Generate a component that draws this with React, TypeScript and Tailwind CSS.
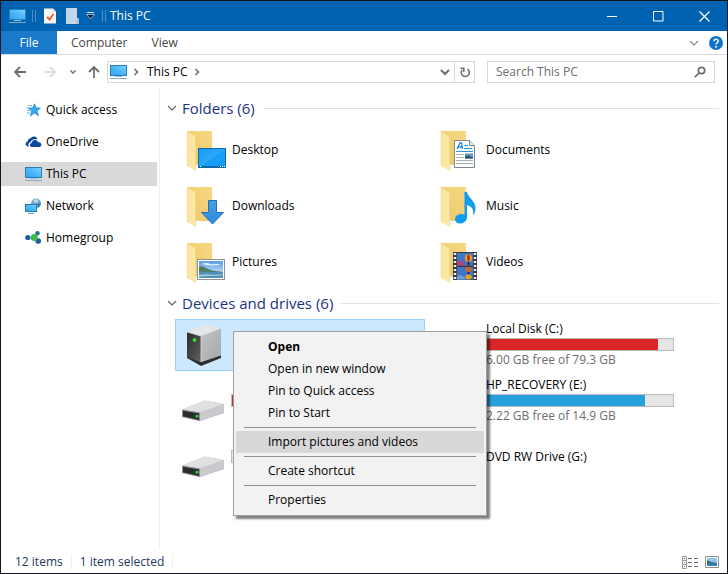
import type { ReactNode } from "react";

/* Gradients shared by all the drawn icons. */
function Gradients() {
  return (
    <svg width="0" height="0" className="absolute" aria-hidden="true">
      <defs>
        <linearGradient id="screen" x1="0" y1="1" x2="1" y2="0">
          <stop offset="0" stopColor="#2ea4ee" />
          <stop offset="0.5" stopColor="#4cb8f8" />
          <stop offset="1" stopColor="#7fd3ff" />
        </linearGradient>
        <linearGradient id="folderBack" x1="1" y1="0" x2="0" y2="1">
          <stop offset="0" stopColor="#f6d783" />
          <stop offset="1" stopColor="#ecc768" />
        </linearGradient>
        <linearGradient id="folderFront" x1="0" y1="0" x2="1" y2="1">
          <stop offset="0" stopColor="#fbe3a0" />
          <stop offset="1" stopColor="#fee9a8" />
        </linearGradient>
        <linearGradient id="desk" x1="0" y1="0" x2="1" y2="1">
          <stop offset="0" stopColor="#0f9bf8" />
          <stop offset="0.5" stopColor="#2fa9fb" />
          <stop offset="0.52" stopColor="#1a9df9" />
          <stop offset="1" stopColor="#149cf8" />
        </linearGradient>
        <linearGradient id="arrowBlue" x1="0" y1="0" x2="0" y2="1">
          <stop offset="0" stopColor="#4a9fe4" />
          <stop offset="1" stopColor="#2c8ce0" />
        </linearGradient>
        <linearGradient id="sky" x1="0" y1="0" x2="0" y2="1">
          <stop offset="0" stopColor="#5b9ce6" />
          <stop offset="1" stopColor="#e6f2fb" />
        </linearGradient>
        <linearGradient id="metal" x1="0" y1="0" x2="1" y2="1">
          <stop offset="0" stopColor="#c4c5c7" />
          <stop offset="1" stopColor="#a4a6a8" />
        </linearGradient>
        <linearGradient id="dark" x1="0" y1="0" x2="1" y2="1">
          <stop offset="0" stopColor="#2a2a2a" />
          <stop offset="1" stopColor="#626262" />
        </linearGradient>
      </defs>
    </svg>
  );
}

function PcIcon() {
  return (
    <svg width="17" height="16" viewBox="0 0 17 16" aria-hidden="true">
      <rect x="0.5" y="1.5" width="16" height="10" fill="url(#screen)" stroke="#2b7db8" />
      <path d="M5 12h7v1H5z" fill="#8fc3e6" />
      <path d="M0 14.5h17" stroke="#8da9c4" />
    </svg>
  );
}

function StarIcon() {
  return (
    <svg width="16" height="16" viewBox="0 0 16 16" aria-hidden="true">
      <path d="M9.6 1.8l1.4 4 4.4.3-3.4 2.8 1.4 4.800-4-2.600-4.200 3 1.500-5L3.400 6.100l4.400-.2z" fill="#33a9ee" stroke="#1d84cf" strokeWidth="0.7" />
      <path d="M3.500 3.500h3.500M1.500 6H4M2.500 8.500H5M2 11h3" stroke="#5fb4ea" />
    </svg>
  );
}

function CloudIcon() {
  return (
    <svg width="17" height="16" viewBox="0 0 17 16" aria-hidden="true">
      <path d="M2.600 12.500A2.600 2.600 0 0 1 2.400 7.500 4 4 0 0 1 5.500 4.200 4.200 4.200 0 0 1 12.400 4.600L11 5.400C8 4.600 5.800 6.500 5.600 8.200 3.500 8.500 2.800 10.500 3.800 12.500z" fill="#0c479d" />
      <path d="M6.400 13A2.100 2.100 0 0 1 6.500 8.900 3.500 3.500 0 0 1 13.200 8.300 2.400 2.400 0 0 1 14.500 13z" fill="#0c479d" />
    </svg>
  );
}

function NetworkIcon() {
  return (
    <svg width="17" height="16" viewBox="0 0 17 16" aria-hidden="true">
      <circle cx="11" cy="5.500" r="5" fill="#6fa7c4" />
      <path d="M8 2.200c2-1.500 4.500-1 5.500.6L11.500 5l-2-.5z" fill="#b9d8e6" />
      <path d="M12 6l3.500-1c.3 2-.8 3.500-2 4.300z" fill="#3c7da3" />
      <rect x="0.500" y="6.500" width="11" height="7" fill="url(#screen)" stroke="#2779b5" />
      <path d="M3 15.500h6" stroke="#6c9fc6" />
    </svg>
  );
}

function HomegroupIcon() {
  return (
    <svg width="17" height="16" viewBox="0 0 17 16" aria-hidden="true">
      <path d="M3 8h6l3-4M9 8l4 4" stroke="#9cc4dd" strokeWidth="1.200" fill="none" />
      <circle cx="2.800" cy="7.500" r="2.600" fill="#1b5fa6" />
      <circle cx="12.500" cy="3.200" r="2.200" fill="#1c6fa8" />
      <circle cx="13.200" cy="11" r="2.800" fill="#185a9c" />
      <circle cx="9.200" cy="7.500" r="3.500" fill="#3cbb4a" />
    </svg>
  );
}

function Folder({ children }: { children: ReactNode }) {
  return (
    <svg width="41" height="42" viewBox="0 0 41 42" aria-hidden="true">
      <path d="M1 1H26V35H8z" fill="url(#folderBack)" />
      <path d="M9 34l3 1-3 5z" fill="#f0f0f0" />
      <path d="M1 1L9.500 6.500V40.500L1 35.500z" fill="url(#folderFront)" stroke="#f3d685" strokeWidth="0.500" />
      {children}
    </svg>
  );
}

const folderArt: Record<string, ReactNode> = {
  Desktop: (
    <>
      <rect x="12.500" y="18.500" width="27" height="19" fill="url(#desk)" stroke="#1468a8" />
      <path d="M13 36.500h26" stroke="#0d6db8" />
      <path d="M14 36.500h1M34 36.500h1M36 36.500h1M38 36.500h1" stroke="#fff" />
    </>
  ),
  Downloads: (
    <path d="M22.500 14.500h8v12h7L26.500 38 15.500 26.500h7z" fill="url(#arrowBlue)" stroke="#2470b8" />
  ),
  Pictures: (
    <>
      <rect x="11.500" y="17.500" width="27" height="20" fill="#fff" stroke="#8d9399" />
      <rect x="13" y="19" width="24" height="17" fill="url(#sky)" />
      <path d="M16 22c3-1.500 6-1 8 0s6-1 10 .5c-5 1.500-14 1-18-.5z" fill="#e9f3fb" />
      <path d="M13 25c3-2 5 0 8 1.500s6 2.500 16 3.500v1H13z" fill="#4d7d5a" />
      <path d="M13 30c7-1 15 0 24 0V36H13z" fill="#4f8fb8" />
      <path d="M13 33c7-2 14 1 24-1v1c-8 2-16 0-24 2z" fill="#9cc7de" />
    </>
  ),
  Documents: (
    <>
      <path d="M14.500 10.500h15l5 5v22h-20z" fill="#fdfdfd" stroke="#7d8790" />
      <path d="M29.500 10.500v5h5" fill="#e4e8eb" stroke="#7d8790" />
      <path d="M17 19l3-6h1.500l1 6M18.500 17h3.500" stroke="#1b86d4" strokeWidth="1.300" fill="none" />
      <path d="M24 15.500h4M24 18.500h8M16 21.500h17" stroke="#2b94dc" />
      <path d="M16 24.500h8M16 27.500h8M16 30.500h17M16 33.500h17" stroke="#a8b0b6" />
      <rect x="25" y="23.500" width="8" height="5" fill="#5d94bf" />
      <path d="M25 28.500v-2l3-1 5 2v1z" fill="#2c5670" />
    </>
  ),
  Music: (
    <path d="M24.500 6h2.500c1 6 9 9 8.500 17-.2 3-1.200 5-2.500 6.500 1.200-6-1-9-6-10.500V31c0 4-3.500 6.500-7 6.500-3 0-5-1.800-5-4.500s3-5 6.500-5c1.200 0 2.200.2 3 .7z" fill="#0f9cee" />
  ),
  Videos: (
    <>
      <rect x="13" y="10" width="24" height="28" fill="#3b3b3b" />
      <rect x="17" y="11" width="16" height="12.500" fill="#3f74c9" />
      <rect x="17" y="25" width="16" height="12.500" fill="#3f74c9" />
      <path d="M17 20c3-3 6-1 8 3.500h-8z" fill="#b0457c" />
      <path d="M17 34c3-2 7 0 9 3.500h-9z" fill="#69a3dd" />
      <ellipse cx="28.500" cy="16" rx="3.600" ry="4" fill="#e9a21b" />
      <path d="M28 12.200c-1 2-1 5 0 7.500h1c1-2.500 1-5.500 0-7.500z" fill="#8f2d22" />
      <ellipse cx="28.500" cy="27.500" rx="3.300" ry="2.500" fill="#c8652b" />
      <ellipse cx="28.500" cy="35" rx="3.300" ry="2.500" fill="#e9a21b" />
      <path d="M28.500 20v3M28.500 30v2" stroke="#231a12" strokeWidth="1.500" />
      <path d="M15 11v26M35 11v26" stroke="#f2f2f2" strokeWidth="2.400" strokeDasharray="2 2" />
    </>
  ),
};

function TowerIcon() {
  return (
    <svg width="41" height="46" viewBox="0 0 41 46" aria-hidden="true">
      <path d="M1 36l14 8 20-8v-3L15 40 1 34z" fill="#2e2e2e" />
      <path d="M1 10L19 2.500l16 4-20 7.500z" fill="#e4e5e7" />
      <path d="M1 10l14 4v26L1 35z" fill="url(#dark)" />
      <path d="M15 14L35 6.500v27L15 40z" fill="url(#metal)" />
      <path d="M1 10l14 4v26" fill="none" stroke="#dcdcde" strokeWidth="0.800" />
      <circle cx="8.500" cy="18" r="2" fill="#35d53b" />
    </svg>
  );
}

/* Drawn low in a square box, so that it sits at the foot of its tile. */
function DriveIcon() {
  return (
    <svg width="44" height="44" viewBox="0 -20 44 44" aria-hidden="true">
      <path d="M1 10.500L24 1.500 43 5v9L19 22 1 18z" fill="#b4b5b8" />
      <path d="M1 10.500L24 1.500 43 5 19 13.500z" fill="#dfe0e2" />
      <path d="M19 13.500L43 5v9L19 22z" fill="#c9cacd" />
      <path d="M1 10.500l18 3v8.500L1 18z" fill="#8e9093" />
      <path d="M2 11.700l16 2.700v6.600L2 17.200z" fill="#2b2c2e" />
      <rect x="14.500" y="16" width="3" height="2.600" fill="#2fd43a" />
    </svg>
  );
}

function Chevron({ dir, className = "", weight = 1.2 }: { dir: "down" | "right"; className?: string; weight?: number }) {
  return (
    <svg width="10" height="10" viewBox="0 0 10 10" fill="none" stroke="currentColor" strokeWidth={weight} className={className} aria-hidden="true">
      <path d={dir === "down" ? "M1 3l4 4 4-4" : "M3.500 2l3 3-3 3"} />
    </svg>
  );
}

function TitleBar() {
  return (
    <header className="flex h-[30px] items-center bg-[#0063b1] pl-2 text-white">
      <PcIcon />
      <i className="ml-1.5 h-3 w-1 border-x border-[#4d8fc8]" />
      <button aria-label="Properties" className="ml-2">
        <svg width="14" height="16" viewBox="0 0 14 16">
          <path d="M0 .5h9l3 3v12H0z" fill="#f6f6f6" />
          <path d="M9 .5v3h3" fill="#cfd8e0" />
          <path d="M3 9l2.500 2.500L9.500 6" fill="none" stroke="#e2602c" strokeWidth="1.800" />
        </svg>
      </button>
      <button aria-label="New folder" className="ml-2">
        <svg width="14" height="16" viewBox="0 0 14 16">
          <path d="M0 0h11v10h2v6H0z" fill="#c3d6ea" />
          <path d="M11 10h2v6h-3z" fill="#a4c0de" />
        </svg>
      </button>
      <button aria-label="Customize Quick Access Toolbar" className="ml-1.5">
        <svg width="10" height="8" viewBox="0 0 10 8">
          <path d="M1 .5h7" stroke="#d6e4f2" />
          <path d="M.5 2.500h8L4.500 7z" fill="#0a1c30" stroke="#c7d8ea" strokeWidth="0.700" />
        </svg>
      </button>
      <i className="ml-1.5 h-3 w-1 border-x border-[#4d8fc8]" />
      <h1 className="ml-1 flex-1">This PC</h1>
      <button aria-label="Minimize" className="grid h-full w-[46px] place-items-center">
        <svg width="11" height="11" viewBox="0 0 11 11" stroke="#fff"><path d="M0 5.500h10" /></svg>
      </button>
      <button aria-label="Maximize" className="grid h-full w-[46px] place-items-center">
        <svg width="11" height="11" viewBox="0 0 11 11" stroke="#fff" fill="none"><path d="M.5 .5h9.500v9.500H.5z" /></svg>
      </button>
      <button aria-label="Close" className="grid h-full w-[46px] place-items-center">
        <svg width="11" height="11" viewBox="0 0 11 11" stroke="#fff" strokeWidth="1.200"><path d="M.5 .5l10 10M10.500 .5l-10 10" /></svg>
      </button>
    </header>
  );
}

function Ribbon() {
  return (
    <nav className="flex h-6 items-stretch border-b border-[#dadbdc] text-[#444]">
      <button className="w-14 bg-[#1979ca] text-white">File</button>
      <button className="ml-3.5">Computer</button>
      <button className="ml-6">View</button>
      <span className="flex-1" />
      <button aria-label="Minimize the Ribbon" className="mr-2.5 text-[#8a8a8a]">
        <Chevron dir="down" />
      </button>
      <button aria-label="Help" className="mr-1">
        <svg width="14" height="14" viewBox="0 0 14 14">
          <circle cx="7" cy="7" r="7" fill="#1272c8" />
          <path d="M5 5.300c0-2.600 4.200-2.600 4.200-.2C9.200 6.700 7 6.800 7 8.600" fill="none" stroke="#fff" strokeWidth="1.500" />
          <circle cx="7" cy="10.800" r="1" fill="#fff" />
        </svg>
      </button>
    </nav>
  );
}

function AddressRow() {
  return (
    <div className="flex h-[34px] items-center px-3">
      <button aria-label="Back" className="text-[#6e6e6e]">
        <svg width="14" height="14" viewBox="0 0 14 14" fill="none" stroke="currentColor" strokeWidth="1.800"><path d="M13 7H2M7 2L2 7l5 5" /></svg>
      </button>
      <button aria-label="Forward" className="ml-4 text-[#d6d6d6]">
        <svg width="14" height="14" viewBox="0 0 14 14" fill="none" stroke="currentColor" strokeWidth="1.500"><path d="M1 7h11M7 2l5 5-5 5" /></svg>
      </button>
      <button aria-label="Recent locations" className="ml-3 text-[#7a7a7a]">
        <svg width="8" height="8" viewBox="0 0 8 8" fill="none" stroke="currentColor" strokeWidth="1.600"><path d="M1.500 2.500L4 5l2.500-2.500" /></svg>
      </button>
      <button aria-label="Up" className="ml-2.5 text-[#6e6e6e]">
        <svg width="14" height="14" viewBox="0 0 14 14" fill="none" stroke="currentColor" strokeWidth="1.800"><path d="M7 13V2M2 7l5-5 5 5" /></svg>
      </button>
      <div className="ml-1.5 flex h-[22px] flex-1 items-center border border-[#d9d9d9] pl-0.5">
        <PcIcon />
        <Chevron dir="right" weight={1.6} className="ml-1 text-[#6e6e6e]" />
        <button className="ml-1.5">This PC</button>
        <Chevron dir="right" weight={1.6} className="ml-1 text-[#6e6e6e]" />
        <span className="flex-1" />
        <button aria-label="Previous locations" className="mr-1 text-[#6e6e6e]"><Chevron dir="down" weight={2} /></button>
        <button aria-label="Refresh" className="grid h-full w-5 place-items-center border-l border-[#d9d9d9] text-[#6e6e6e]">
          <svg width="12" height="12" viewBox="0 0 12 12" fill="none" stroke="currentColor" strokeWidth="1.600"><path d="M8.500 3.200A4 4 0 1 1 3.200 4M1.500 2.200h3.300v3.600" /></svg>
        </button>
      </div>
      <label className="ml-3 flex h-[22px] w-[228px] items-center border border-[#d9d9d9] px-2">
        <input type="search" aria-label="Search This PC" placeholder="Search This PC" className="min-w-0 flex-1 outline-none placeholder:text-[#6d6d6d]" />
        <svg width="12" height="12" viewBox="0 0 12 12" fill="none" stroke="#6e6e6e" strokeWidth="1.700" aria-hidden="true"><circle cx="7.500" cy="4.500" r="3.200" /><path d="M5.200 6.800L.8 11.200" /></svg>
      </label>
    </div>
  );
}

const places = [
  { name: "Quick access", icon: <StarIcon /> },
  { name: "OneDrive", icon: <CloudIcon /> },
  { name: "This PC", icon: <PcIcon />, current: true },
  { name: "Network", icon: <NetworkIcon /> },
  { name: "Homegroup", icon: <HomegroupIcon /> },
];

function Sidebar() {
  return (
    <nav className="w-[159px] shrink-0 border-r border-[#f0f0f0] pt-[9px] pr-0.5">
      <ul className="flex flex-col gap-2">
        {places.map((p) => (
          <li key={p.name}>
            <a href="#" className={`flex h-6 items-center gap-1 pl-6 ${p.current ? "bg-[#d9d9d9]" : ""}`}>
              <span className="w-[17px]">{p.icon}</span>
              {p.name}
            </a>
          </li>
        ))}
      </ul>
    </nav>
  );
}

function GroupHeader({ title }: { title: string }) {
  return (
    <h2 className="flex h-6 items-center text-[15px] text-[#1e3287]">
      <Chevron dir="down" weight={1.3} className="mr-[5px] text-[#6e6e6e]" />
      {title}
      <span className="ml-2 h-px flex-1 bg-[#e2e2e2]" />
    </h2>
  );
}

function Tile({ icon, children, selected = false }: { icon: ReactNode; children?: ReactNode; selected?: boolean }) {
  return (
    <div className={`flex h-[52px] items-center border ${selected ? "border-[#99d1ff] bg-[#cce8ff]" : "border-transparent"}`}>
      <div className="w-[55px] shrink-0">{icon}</div>
      {children}
    </div>
  );
}

function Capacity({ name, free, used, color }: { name?: string; free?: string; used: number; color: string }) {
  return (
    <div className="w-[189px] pb-px leading-4">
      <p className="h-4 pl-px">{name}</p>
      <div className="my-px h-[13px] border border-[#bcbcbc] bg-[#e6e6e6]" role="progressbar" aria-label="Space used" aria-valuenow={used}>
        <div className={`h-full ${color}`} style={{ width: `${used}%` }} />
      </div>
      <p className="h-4 pl-px text-[#6d6d6d]">{free}</p>
    </div>
  );
}

const menuGroups = [
  ["Open", "Open in new window", "Pin to Quick access", "Pin to Start"],
  ["Import pictures and videos"],
  ["Create shortcut"],
  ["Properties"],
];

function ContextMenu() {
  return (
    <div role="menu" className="absolute top-3 left-[58px] z-10 w-[254px] border border-[#a0a0a0] bg-[#f2f2f2] px-0.5 py-1 shadow-[3px_3px_2px_rgba(0,0,0,0.5)]">
      {menuGroups.map((group, i) => (
        <div key={group[0]}>
          {i > 0 && <hr className="mx-2 my-[3px] border-[#919191]" />}
          {group.map((item) => (
            <button
              key={item}
              role="menuitem"
              className={`block h-[22px] w-full pl-8 text-left ${item === "Open" ? "font-bold" : ""} ${item.startsWith("Import") ? "bg-[#d8d8d8]" : ""}`}
            >
              {item}
            </button>
          ))}
        </div>
      ))}
    </div>
  );
}

const tileGrid = "mt-1 grid grid-cols-[repeat(auto-fill,250px)] gap-1 pl-2";

function Content() {
  return (
    <main className="min-w-0 flex-1 pt-[7px] pr-2 pl-[7px]">
      <GroupHeader title="Folders (6)" />
      <div className={tileGrid}>
        {["Desktop", "Documents", "Downloads", "Music", "Pictures", "Videos"].map((name) => (
          <Tile key={name} icon={<div className="pt-0.5 pl-2.5"><Folder>{folderArt[name]}</Folder></div>}>
            <span className="pl-px">{name}</span>
          </Tile>
        ))}
      </div>
      <div className="h-[3px]" />
      <GroupHeader title="Devices and drives (6)" />
      <div className={tileGrid}>
        <div className="relative">
          <Tile selected icon={<div className="pl-2.5"><TowerIcon /></div>} />
          <ContextMenu />
        </div>
        <Tile icon={<div className="pl-[5px]"><DriveIcon /></div>}>
          <Capacity name="Local Disk (C:)" free="6.00 GB free of 79.3 GB" used={92} color="bg-[#da2626]" />
        </Tile>
        <Tile icon={<div className="pl-[5px]"><DriveIcon /></div>}>
          <Capacity used={90} color="bg-[#da2626]" />
        </Tile>
        <Tile icon={<div className="pl-[5px]"><DriveIcon /></div>}>
          <Capacity name="HP_RECOVERY (E:)" free="2.22 GB free of 14.9 GB" used={85} color="bg-[#26a0da]" />
        </Tile>
        <Tile icon={<div className="pl-[5px]"><DriveIcon /></div>}>
          <Capacity used={0} color="bg-[#26a0da]" />
        </Tile>
        <Tile icon={<div className="pl-[5px]"><DriveIcon /></div>}>
          <span className="pl-px">DVD RW Drive (G:)</span>
        </Tile>
      </div>
    </main>
  );
}

function StatusBar() {
  return (
    <footer className="flex h-6 items-center pt-0.5 pr-2 pl-3.5 text-[#1e395b]">
      <span className="border-r border-[#f0f0f0] pr-2">12 items</span>
      <span className="border-r border-[#f0f0f0] px-2">1 item selected</span>
      <span className="flex-1" />
      <button aria-label="Details view" className="mr-1.5">
        <svg width="17" height="13" viewBox="0 0 17 13" fill="none">
          <path d="M.5 .5h4v12h-4zM.5 4.500h4M.5 8.500h4" stroke="#9a9a9a" />
          <path d="M2 2.500h1M2 10.500h1" stroke="#c03434" />
          <path d="M2 6.500h1" stroke="#3878c0" />
          <path d="M6 2.500h4M12 2.500h4M6 6.500h4M12 6.500h4M6 10.500h4M12 10.500h4" stroke="#6a6a6a" />
        </svg>
      </button>
      <button aria-label="Large thumbnails">
        <svg width="14" height="12" viewBox="0 0 14 12">
          <path d="M.5 .5h13v11H.5z" fill="#fff" stroke="#8f8f8f" />
          <path d="M2 2h10v8H2z" fill="#8fc6ee" />
          <path d="M2 4l4 2 6 1v1H2z" fill="#3d7060" />
          <path d="M2 7.500h10V10H2z" fill="#357fb8" />
        </svg>
      </button>
    </footer>
  );
}

export default function App() {
  return (
    <div className="flex min-h-screen flex-col border border-[#16161c] bg-white font-['Open_Sans','Noto_Sans',sans-serif] text-xs text-black">
      <Gradients />
      <TitleBar />
      <Ribbon />
      <AddressRow />
      <div className="flex flex-1">
        <Sidebar />
        <Content />
      </div>
      <StatusBar />
    </div>
  );
}
